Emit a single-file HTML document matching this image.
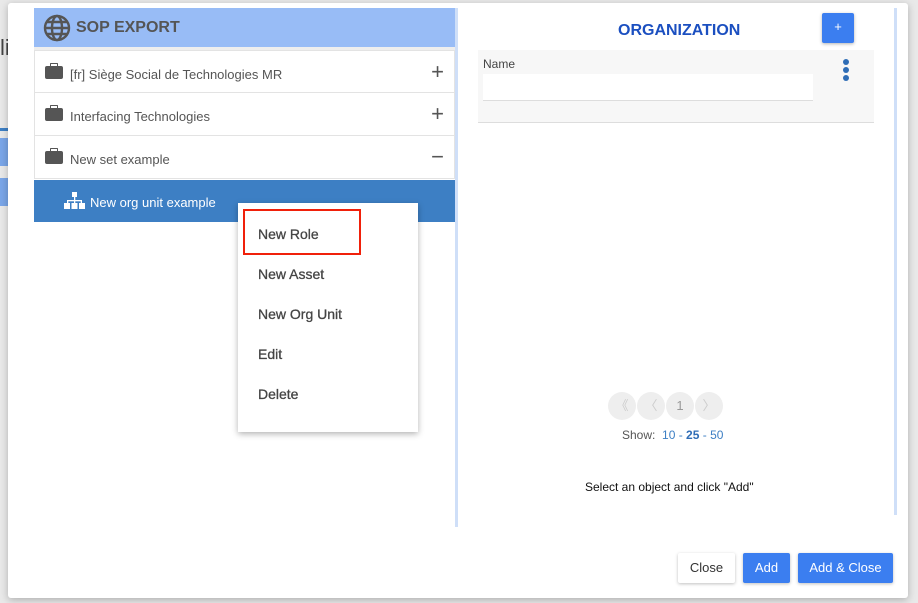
<!DOCTYPE html>
<html><head><meta charset="utf-8"><style>
*{box-sizing:border-box;margin:0;padding:0}
body{width:918px;height:603px;overflow:hidden;background:#e9e9e9;font-family:"Liberation Sans",Arial,sans-serif;position:relative}
.abs{position:absolute}
.modal{left:8px;top:3px;width:900px;height:595px;background:#fff;border-radius:3px;box-shadow:0 2px 8px rgba(0,0,0,.25)}
.row{position:absolute;left:34px;width:421px;height:43px;border:1px solid #e3e3e3;border-top:none;background:#fff;font-size:13px;color:#555}
.row .t{position:absolute;left:35px;top:16px}
.row .ic{position:absolute;left:10px;top:15px;width:18px;height:13px;background:#555;border-radius:2px}
.row .ic:before{content:"";position:absolute;left:5px;top:-3px;width:6px;height:3px;border:1.5px solid #555;border-bottom:none;border-radius:1px 1px 0 0}
.row .pm{position:absolute;right:10px;top:8px;font-size:22px;color:#555;font-weight:300}
.menu{left:238px;top:203px;width:180px;height:229px;background:#fff;box-shadow:0 2px 6px rgba(0,0,0,.3);font-size:14px;color:#444;-webkit-text-stroke:0.3px #444}
.menu div{position:absolute;left:20px}
.btn{position:absolute;top:553px;height:30px;font-size:13px;line-height:30px;text-align:center;border-radius:2px;box-shadow:0 1px 3px rgba(0,0,0,.25)}
</style></head><body>
<div class="abs" style="left:0;top:35px;width:8px;height:50px;font-size:22px;color:#444">li</div>
<div class="abs" style="left:0;top:128px;width:8px;height:3px;background:#3d7fc4"></div>
<div class="abs" style="left:0;top:138px;width:8px;height:28px;background:#7aa6e8"></div>
<div class="abs" style="left:0;top:178px;width:8px;height:28px;background:#7aa6e8"></div>
<div class="abs modal"></div>
<div class="abs" style="left:34px;top:8px;width:421px;height:39px;background:#98bcf6"></div>
<svg class="abs" style="left:43px;top:14px" width="28" height="28" viewBox="0 0 28 28" fill="none" stroke="#555" stroke-width="2.4"><circle cx="14" cy="14" r="12"/><ellipse cx="14" cy="14" rx="5" ry="12"/><line x1="2" y1="14" x2="26" y2="14"/><line x1="4" y1="8" x2="24" y2="8"/><line x1="4" y1="20" x2="24" y2="20"/></svg>
<div class="abs" style="left:76px;top:19px;font-size:16px;font-weight:bold;color:#555">SOP EXPORT</div>
<div class="abs" style="left:34px;top:47px;width:421px;height:3px;background:#eee"></div>
<div class="row" style="top:50px;border-top:1px solid #e3e3e3"><span class="ic"></span><span class="t">[fr] Siège Social de Technologies MR</span><span class="pm">+</span></div>
<div class="row" style="top:93px"><span class="ic"></span><span class="t">Interfacing Technologies</span><span class="pm">+</span></div>
<div class="row" style="top:136px"><span class="ic"></span><span class="t">New set example</span><span class="pm">−</span></div>
<div class="abs" style="left:34px;top:180px;width:421px;height:42px;background:#3d7fc4"></div>
<svg class="abs" style="left:64px;top:192px" width="21" height="17" viewBox="0 0 21 17" fill="#fff"><rect x="8" y="0" width="5" height="5"/><rect x="10" y="5" width="1.3" height="3"/><rect x="3" y="8" width="15" height="1.3"/><rect x="3" y="8" width="1.3" height="4"/><rect x="16.7" y="8" width="1.3" height="4"/><rect x="10" y="8" width="1.3" height="4"/><rect x="0" y="11" width="6" height="6"/><rect x="7.5" y="11" width="6" height="6"/><rect x="15" y="11" width="6" height="6"/></svg>
<div class="abs" style="left:90px;top:195px;font-size:13px;color:#fff">New org unit example</div>
<div class="abs" style="left:455px;top:8px;width:3px;height:519px;background:#cfdff8"></div>
<div class="abs" style="left:894px;top:8px;width:3px;height:507px;background:#cfdff8"></div>
<div class="abs" style="left:618px;top:22px;font-size:16px;font-weight:bold;color:#1b4fc0">ORGANIZATION</div>
<div class="abs" style="left:822px;top:13px;width:32px;height:30px;background:#3b7ef0;border-radius:2px;color:#fff;text-align:center;line-height:28px;font-size:13px;box-shadow:0 1px 3px rgba(0,0,0,.3)">+</div>
<div class="abs" style="left:478px;top:50px;width:396px;height:73px;background:#f7f7f7;border-bottom:1px solid #ddd"></div>
<div class="abs" style="left:483px;top:57px;font-size:12px;color:#444">Name</div>
<div class="abs" style="left:483px;top:74px;width:330px;height:27px;background:#fff;border-bottom:1px solid #ddd"></div>
<div class="abs" style="left:843px;top:59px;width:6px;height:22px">
<div style="width:6px;height:6px;border-radius:3px;background:#2f6db6;margin-bottom:2px"></div><div style="width:6px;height:6px;border-radius:3px;background:#2f6db6;margin-bottom:2px"></div><div style="width:6px;height:6px;border-radius:3px;background:#2f6db6"></div></div>
<div class="abs" style="left:608px;top:392px;width:116px;height:28px;font-size:13px;color:#999">
<div class="abs" style="left:0;width:28px;height:28px;border-radius:14px;background:#eee;text-align:center;line-height:28px;color:#ccc">《</div>
<div class="abs" style="left:29px;width:28px;height:28px;border-radius:14px;background:#eee;text-align:center;line-height:28px;color:#ccc">〈</div>
<div class="abs" style="left:58px;width:28px;height:28px;border-radius:14px;background:#eee;text-align:center;line-height:28px">1</div>
<div class="abs" style="left:87px;width:28px;height:28px;border-radius:14px;background:#eee;text-align:center;line-height:28px;color:#ccc">〉</div></div>
<div class="abs" style="left:622px;top:428px;font-size:12px;color:#555">Show:&nbsp; <span style="color:#3d7fc4">10 - <b style="color:#2f6db6">25</b> - 50</span></div>
<div class="abs" style="left:585px;top:480px;font-size:12px;color:#111">Select an object and click "Add"</div>
<div class="btn" style="left:678px;width:57px;background:#fff;color:#333">Close</div>
<div class="btn" style="left:743px;width:47px;background:#3b7ef0;color:#fff">Add</div>
<div class="btn" style="left:798px;width:95px;background:#3b7ef0;color:#fff">Add &amp; Close</div>
<div class="abs menu">
<div style="top:23px">New Role</div><div style="top:63px">New Asset</div><div style="top:103px">New Org Unit</div><div style="top:143px">Edit</div><div style="top:183px">Delete</div></div>
<div class="abs" style="left:243px;top:209px;width:118px;height:46px;border:2px solid #f0200a"></div>
</body></html>
